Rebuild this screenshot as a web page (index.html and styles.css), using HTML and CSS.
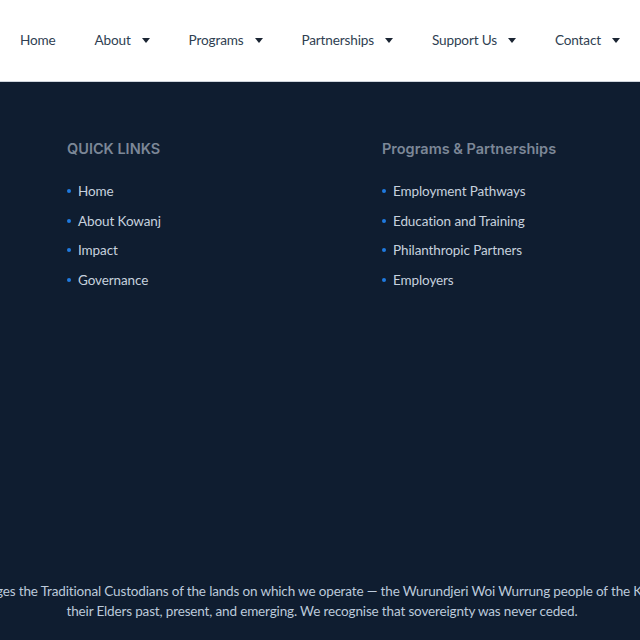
FILE: index.html
```html
<!DOCTYPE html>
<html lang="en">
<head>
<meta charset="utf-8">
<title>Kowanj</title>
<link rel="stylesheet" href="styles.css">
</head>
<body>
<header class="site-header">
  <nav class="main-nav">
    <a class="nav-item" href="#">Home</a>
    <a class="nav-item has-sub" href="#">About <span class="caret"></span></a>
    <a class="nav-item has-sub" href="#">Programs <span class="caret"></span></a>
    <a class="nav-item has-sub" href="#">Partnerships <span class="caret"></span></a>
    <a class="nav-item has-sub" href="#">Support Us <span class="caret"></span></a>
    <a class="nav-item has-sub" href="#">Contact <span class="caret"></span></a>
  </nav>
</header>
<footer class="site-footer">
  <div class="footer-cols">
    <section class="footer-col">
      <h3 class="footer-heading upper">QUICK LINKS</h3>
      <ul class="footer-list">
        <li><a href="#">Home</a></li>
        <li><a href="#">About Kowanj</a></li>
        <li><a href="#">Impact</a></li>
        <li><a href="#">Governance</a></li>
      </ul>
    </section>
    <section class="footer-col">
      <h3 class="footer-heading">Programs &amp; Partnerships</h3>
      <ul class="footer-list">
        <li><a href="#">Employment Pathways</a></li>
        <li><a href="#">Education and Training</a></li>
        <li><a href="#">Philanthropic Partners</a></li>
        <li><a href="#">Employers</a></li>
      </ul>
    </section>
  </div>
  <div class="ack-wrap">
    <p class="ack">Kowanj acknowledges the Traditional Custodians of the lands on which we operate — the Wurundjeri Woi Wurrung people of the Kulin Nation, and pay<br>their Elders past, present, and emerging. We recognise that sovereignty was never ceded.</p>
  </div>
</footer>
</body>
</html>
```
FILE: styles.css
```css
* { box-sizing: border-box; }
html, body { margin: 0; padding: 0; }
body {
  width: 640px;
  height: 640px;
  overflow: hidden;
  font-family: "Lato", "Liberation Sans", sans-serif;
  background: #0f1d30;
  display: flex;
  flex-direction: column;
}
a { text-decoration: none; color: inherit; }

.site-header {
  height: 82px;
  background: #ffffff;
  border-bottom: 1px solid #cfd5dc;
  flex: none;
}
.main-nav {
  height: 81px;
  display: flex;
  align-items: center;
  justify-content: space-between;
  padding: 0 20px 2px;
}
.nav-item {
  font-size: 13.6px;
  letter-spacing: -0.15px;
  color: #2f3f52;
  display: flex;
  align-items: center;
  gap: 11px;
}
.caret {
  width: 0;
  height: 0;
  border-left: 4.5px solid transparent;
  border-right: 4.5px solid transparent;
  border-top: 5px solid #1b2533;
  margin-top: 1px;
}

.site-footer {
  flex: 1;
  display: flex;
  flex-direction: column;
  background: #0f1d30;
}
.footer-cols {
  display: grid;
  grid-template-columns: 315px 315px;
  padding: 58px 0 0 67px;
  flex: 1;
}
.footer-heading {
  margin: 0 0 24px;
  font-family: "Inter", "Liberation Sans", sans-serif;
  font-weight: 600;
  font-size: 14.5px;
  color: #7c8797;
  line-height: 18px;
}
.footer-list {
  list-style: none;
  margin: 0;
  padding: 0;
  display: flex;
  flex-direction: column;
  gap: 11.7px;
}
.footer-list li {
  display: flex;
  align-items: center;
  gap: 7px;
  font-size: 13.5px;
  letter-spacing: -0.1px;
  line-height: 18px;
  color: #c6d1de;
}
.footer-list li::before {
  content: "";
  width: 4px;
  height: 4px;
  border-radius: 50%;
  background: #1f7ae0;
  flex: none;
}
.ack-wrap {
  display: flex;
  justify-content: center;
  padding: 0 0 19px 4px;
}
.ack {
  margin: 0;
  white-space: nowrap;
  text-align: center;
  font-size: 13.5px;
  letter-spacing: -0.15px;
  line-height: 20px;
  color: #bccadb;
  flex: none;
}
```
